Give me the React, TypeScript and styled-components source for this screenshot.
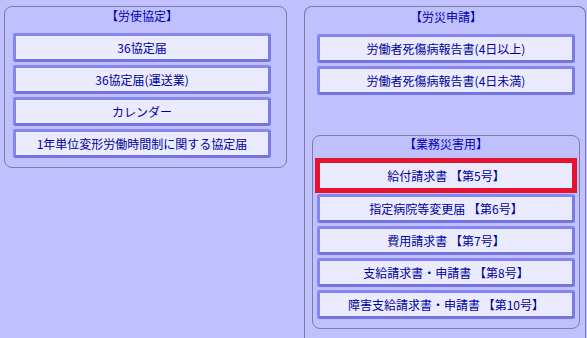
import React from "react";
import styled, { createGlobalStyle } from "styled-components";

// Styles globaux de la page
const GlobalStyle = createGlobalStyle`
  html, body {
    margin: 0;
    padding: 0;
    background: #c0c0ff;
    overflow: hidden;
  }
  body {
    font-family: "Noto Sans CJK JP", "Liberation Sans", sans-serif;
  }
`;

const kyoteiItems = [
  "36協定届",
  "36協定届(運送業)",
  "カレンダー",
  "1年単位変形労働時間制に関する協定届",
];

const shinseiItems = ["労働者死傷病報告書(4日以上)", "労働者死傷病報告書(4日未満)"];

const gyomuItems = [
  "給付請求書 【第5号】",
  "指定病院等変更届 【第6号】",
  "費用請求書 【第7号】",
  "支給請求書・申請書 【第8号】",
  "障害支給請求書・申請書 【第10号】",
];

const App: React.FC = () => {
  const selected = 0;

  return (
    <>
      <GlobalStyle />
      <Page>
        <LeftPanel>
          <PanelTitle>{"【労使協定】"}</PanelTitle>
          <ButtonList>
            {kyoteiItems.map((label) => (
              <MenuButton key={label}>{label}</MenuButton>
            ))}
          </ButtonList>
        </LeftPanel>

        <RightPanel>
          <PanelTitle $top={1}>{"【労災申請】"}</PanelTitle>
          <ButtonList $inset={5}>
            {shinseiItems.map((label) => (
              <MenuButton key={label}>{label}</MenuButton>
            ))}
          </ButtonList>

          <SubPanel>
            <SubTitle>{"【業務災害用】"}</SubTitle>
            <ButtonList>
              {gyomuItems.map((label, i) => (
                <MenuButton key={label} $selected={i === selected}>
                  {label}
                </MenuButton>
              ))}
            </ButtonList>
          </SubPanel>
        </RightPanel>
      </Page>
    </>
  );
};

const Page = styled.div`
  display: flex;
  align-items: flex-start;
  gap: 17px;
  padding: 6px 0 0 4px;
  height: 338px;
  box-sizing: border-box;
  overflow: hidden;
`;

const Panel = styled.section`
  box-sizing: border-box;
  border: 1px solid #7c7c9c;
  border-radius: 8px;
  display: flex;
  flex-direction: column;
`;

const LeftPanel = styled(Panel)`
  width: 283px;
  padding: 0 15px 9px 8px;
`;

// Le cadre de droite continue au-delà du bas de la fenêtre
const RightPanel = styled(Panel)`
  width: 282px;
  height: 332px;
  padding: 0 5px 0 7px;
  border-bottom: none;
  border-radius: 8px 8px 0 0;
`;

const PanelTitle = styled.div<{ $top?: number }>`
  height: 26px;
  padding-top: ${(p) => p.$top ?? 0}px;
  line-height: 18px;
  text-align: center;
  font-size: 12px;
  color: #0000b4;
`;

const SubPanel = styled(Panel)`
  width: 268px;
  margin-top: 40px;
  padding: 0 4px 9px 4px;
`;

const SubTitle = styled.div`
  height: 22px;
  line-height: 16px;
  text-align: center;
  font-size: 12px;
  color: #0000b4;
`;

const ButtonList = styled.div<{ $inset?: number }>`
  display: flex;
  flex-direction: column;
  gap: 3px;
  padding: 0 ${(p) => p.$inset ?? 0}px;
`;

const MenuButton = styled.div<{ $selected?: boolean }>`
  box-sizing: border-box;
  height: ${(p) => (p.$selected ? 35 : 29)}px;
  margin: ${(p) => (p.$selected ? "0 -2px -2px" : "0")};
  display: flex;
  align-items: center;
  justify-content: center;
  background: #ebebff;
  border: ${(p) => (p.$selected ? "5px solid #e4142e" : "3px solid #8686f2")};
  border-bottom-color: ${(p) => (p.$selected ? "#e4142e" : "#7474e4")};
  border-right-color: ${(p) => (p.$selected ? "#e4142e" : "#7a7ae8")};
  border-radius: ${(p) => (p.$selected ? 0 : 3)}px;
  font-size: 12px;
  color: #00009c;
  white-space: nowrap;
  cursor: pointer;
`;

export default App;
